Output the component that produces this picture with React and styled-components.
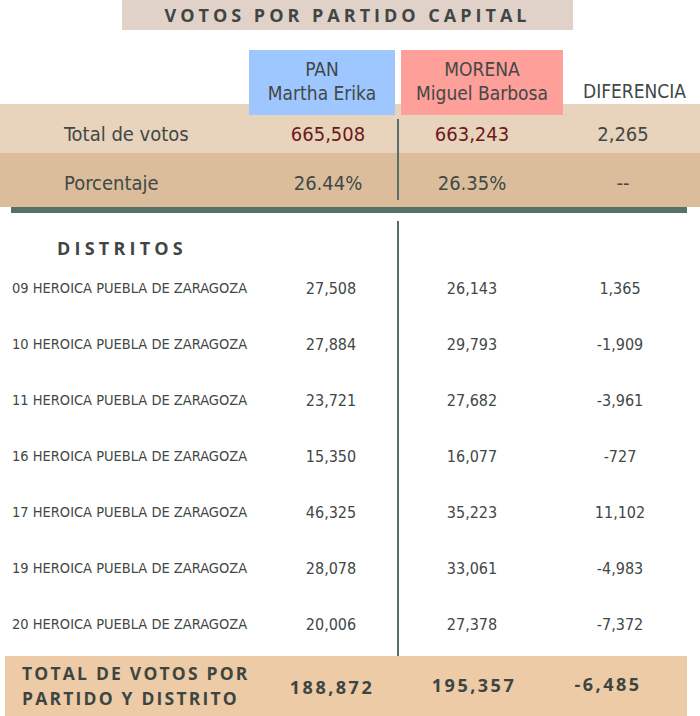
import React from "react";
import styled, { createGlobalStyle } from "styled-components";

const GlobalStyle = createGlobalStyle`
  html, body { margin: 0; padding: 0; background: #ffffff; }
  body { width: 700px; overflow: hidden; }
`;

const narrow = `"Noto Sans Condensed", "DejaVu Sans Condensed", "Liberation Sans", sans-serif`;
const boldFont = `"Open Sans", "Liberation Sans", sans-serif`;
const ink = "#414846";

const Page = styled.div`
  width: 700px;
  height: 716px;
  font-family: ${narrow};
  font-stretch: condensed;
  color: ${ink};
  display: flex;
  flex-direction: column;
`;

const TitleWrap = styled.div`
  padding-left: 122px;
  display: flex;
`;

const Title = styled.h1`
  margin: 0;
  width: 451px;
  height: 30px;
  background: #e0d2c9;
  font-family: ${boldFont};
  font-stretch: normal;
  font-weight: 700;
  font-size: 18px;
  letter-spacing: 4px;
  color: #3f4643;
  display: flex;
  align-items: center;
  justify-content: center;
`;

const HeaderRow = styled.div`
  margin-top: 20px;
  height: 65px;
  margin-bottom: -11px;
  padding-left: 249px;
  display: grid;
  grid-template-columns: 146px 162px 1fr;
  column-gap: 6px;
  position: relative;
  z-index: 1;
`;

const PartyBox = styled.div`
  background: ${(p) => p.$bg || "transparent"};
  display: flex;
  flex-direction: column;
  align-items: center;
  justify-content: ${(p) => (p.$bottom ? "flex-end" : "flex-start")};
  padding-top: ${(p) => (p.$bottom ? "0" : "7px")};
  padding-bottom: ${(p) => (p.$bottom ? "12px" : "0")};
  font-size: 19px;
  line-height: 24px;
  color: ${ink};
`;

const TopBlock = styled.div`
  position: relative;
  &::after {
    content: "";
    position: absolute;
    left: 397px;
    top: 15px;
    bottom: 7px;
    width: 2px;
    background: #57706a;
  }
`;

const TopRow = styled.div`
  height: ${(p) => p.$h}px;
  box-sizing: border-box;
  padding-top: ${(p) => p.$pt}px;
  background: ${(p) => p.$bg};
  display: grid;
  grid-template-columns: 258px 140px 148px 154px;
  align-items: center;
  font-size: 20px;
`;

const RowLabel = styled.div`
  padding-left: 64px;
`;

const Value = styled.div`
  text-align: center;
  color: ${(p) => (p.$red ? "#6b1a1a" : ink)};
`;

const GreenBar = styled.div`
  margin: 0 13px 0 11px;
  height: 6px;
  background: #57706a;
`;

const Districts = styled.div`
  margin-top: 8px;
  position: relative;
  &::before {
    content: "";
    position: absolute;
    left: 397px;
    top: 0;
    bottom: 0;
    width: 2px;
    background: #57706a;
  }
`;

const DistrictsHeading = styled.h2`
  margin: 0;
  height: 39px;
  padding-left: 57px;
  display: flex;
  align-items: flex-end;
  font-family: ${boldFont};
  font-stretch: normal;
  font-weight: 700;
  font-size: 18px;
  letter-spacing: 4.2px;
  color: #3f4643;
`;

const DistrictRow = styled.div`
  height: 56px;
  display: grid;
  grid-template-columns: 258px 146px 136px 160px;
  align-items: center;
  font-size: 16px;
`;

const DistrictName = styled.div`
  padding-left: 12px;
  white-space: nowrap;
  font-size: 14.5px;
`;

const Num = styled.div`
  text-align: center;
`;

const Spacer = styled.div`
  height: 4px;
`;

const Footer = styled.div`
  margin: 0 13px 0 5px;
  height: 60px;
  background: #edcba6;
  display: grid;
  grid-template-columns: 240px 174px 110px 158px;
  align-items: center;
  font-family: ${boldFont};
  font-stretch: normal;
  font-weight: 700;
  color: #3d4542;
`;

const FooterLabel = styled.div`
  padding-left: 17px;
  font-size: 17.5px;
  line-height: 25px;
  letter-spacing: 2.2px;
  white-space: nowrap;
`;

const FooterNum = styled.div`
  text-align: center;
  font-size: 18px;
  letter-spacing: 2.5px;
  transform: translateY(${(p) => p.$dy || 0}px);
`;

const districts = [
  ["09", "27,508", "26,143", "1,365"],
  ["10", "27,884", "29,793", "-1,909"],
  ["11", "23,721", "27,682", "-3,961"],
  ["16", "15,350", "16,077", "-727"],
  ["17", "46,325", "35,223", "11,102"],
  ["19", "28,078", "33,061", "-4,983"],
  ["20", "20,006", "27,378", "-7,372"],
];

export default function App() {
  return (
    <Page>
      <GlobalStyle />
      <TitleWrap>
        <Title>VOTOS POR PARTIDO CAPITAL</Title>
      </TitleWrap>

      <HeaderRow>
        <PartyBox $bg="#9ec6ff">
          <span>PAN</span>
          <span>Martha Erika</span>
        </PartyBox>
        <PartyBox $bg="#ff9f9a">
          <span>MORENA</span>
          <span>Miguel Barbosa</span>
        </PartyBox>
        <PartyBox $bottom>
          <span>DIFERENCIA</span>
        </PartyBox>
      </HeaderRow>

      <TopBlock>
        <TopRow $h={49} $pt={10} $bg="#e8d3bc">
          <RowLabel>Total de votos</RowLabel>
          <Value $red>665,508</Value>
          <Value $red>663,243</Value>
          <Value>2,265</Value>
        </TopRow>
        <TopRow $h={54} $pt={6} $bg="#dbbd9c">
          <RowLabel>Porcentaje</RowLabel>
          <Value>26.44%</Value>
          <Value>26.35%</Value>
          <Value>--</Value>
        </TopRow>
      </TopBlock>
      <GreenBar />

      <Districts>
        <DistrictsHeading>DISTRITOS</DistrictsHeading>
        {districts.map(([d, a, b, c]) => (
          <DistrictRow key={d}>
            <DistrictName>{d} HEROICA PUEBLA DE ZARAGOZA</DistrictName>
            <Num>{a}</Num>
            <Num>{b}</Num>
            <Num>{c}</Num>
          </DistrictRow>
        ))}
        <Spacer />
      </Districts>

      <Footer>
        <FooterLabel>
          TOTAL DE VOTOS POR
          <br />
          PARTIDO Y DISTRITO
        </FooterLabel>
        <FooterNum $dy={1}>188,872</FooterNum>
        <FooterNum $dy={-1}>195,357</FooterNum>
        <FooterNum $dy={-2}>-6,485</FooterNum>
      </Footer>
    </Page>
  );
}
